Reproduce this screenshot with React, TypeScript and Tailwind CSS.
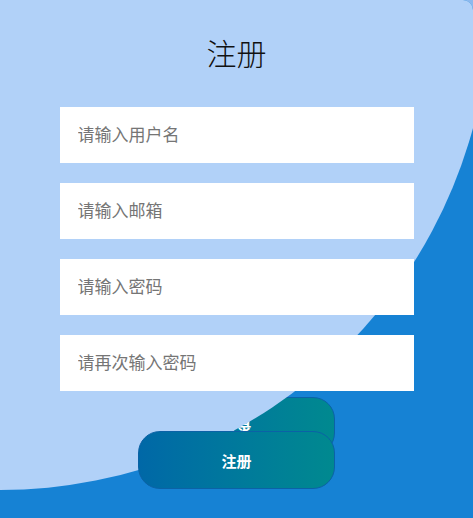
import { useState } from 'react';

export default function App() {
  const [username, setUsername] = useState('');
  const [email, setEmail] = useState('');
  const [password, setPassword] = useState('');
  const [confirm, setConfirm] = useState('');

  const inputClass =
    'relative z-10 w-[354px] h-14 bg-white px-[18px] pb-[3px] text-[17px] text-[#333] placeholder:text-[#757575] outline-none';

  return (
    <div
      className="w-[473px] h-[518px] bg-[#8db9ee]"
      style={{ fontFamily: '"Noto Sans CJK SC", "Noto Sans", sans-serif' }}
    >
      <div className="relative w-full h-full overflow-hidden rounded-tr-[10px] bg-[#1682d4] flex flex-col items-center">
        {/* decorative circle */}
        <div className="absolute -left-[490px] -top-[490px] w-[980px] h-[980px] rounded-full bg-[#b1d1f8]" />

        <h1 className="relative z-10 mt-[30px] text-[30px] leading-[45px] font-light text-[#111]">注册</h1>

        <form className="flex flex-col items-center gap-5 mt-8" onSubmit={(e) => e.preventDefault()}>
          <input
            className={inputClass}
            placeholder="请输入用户名"
            value={username}
            onChange={(e) => setUsername(e.target.value)}
          />
          <input
            className={inputClass}
            placeholder="请输入邮箱"
            value={email}
            onChange={(e) => setEmail(e.target.value)}
          />
          <input
            type="password"
            className={inputClass}
            placeholder="请输入密码"
            value={password}
            onChange={(e) => setPassword(e.target.value)}
          />
          <input
            type="password"
            className={inputClass}
            placeholder="请再次输入密码"
            value={confirm}
            onChange={(e) => setConfirm(e.target.value)}
          />
        </form>

        <div className="flex flex-col items-center mt-1.5">
          <button
            type="button"
            className="w-[197px] h-[58px] pt-0.5 rounded-[22px] border border-[#0b62a6] bg-gradient-to-r from-[#0068a7] to-[#00898f] text-white text-[15px] font-bold"
          >
            登录
          </button>
          <button
            type="submit"
            className="relative z-10 -mt-6 w-[197px] h-[58px] pt-0.5 rounded-[22px] border border-[#0b62a6] bg-gradient-to-r from-[#0068a7] to-[#00898f] text-white text-[15px] font-bold"
          >
            注册
          </button>
        </div>
      </div>
    </div>
  );
}
